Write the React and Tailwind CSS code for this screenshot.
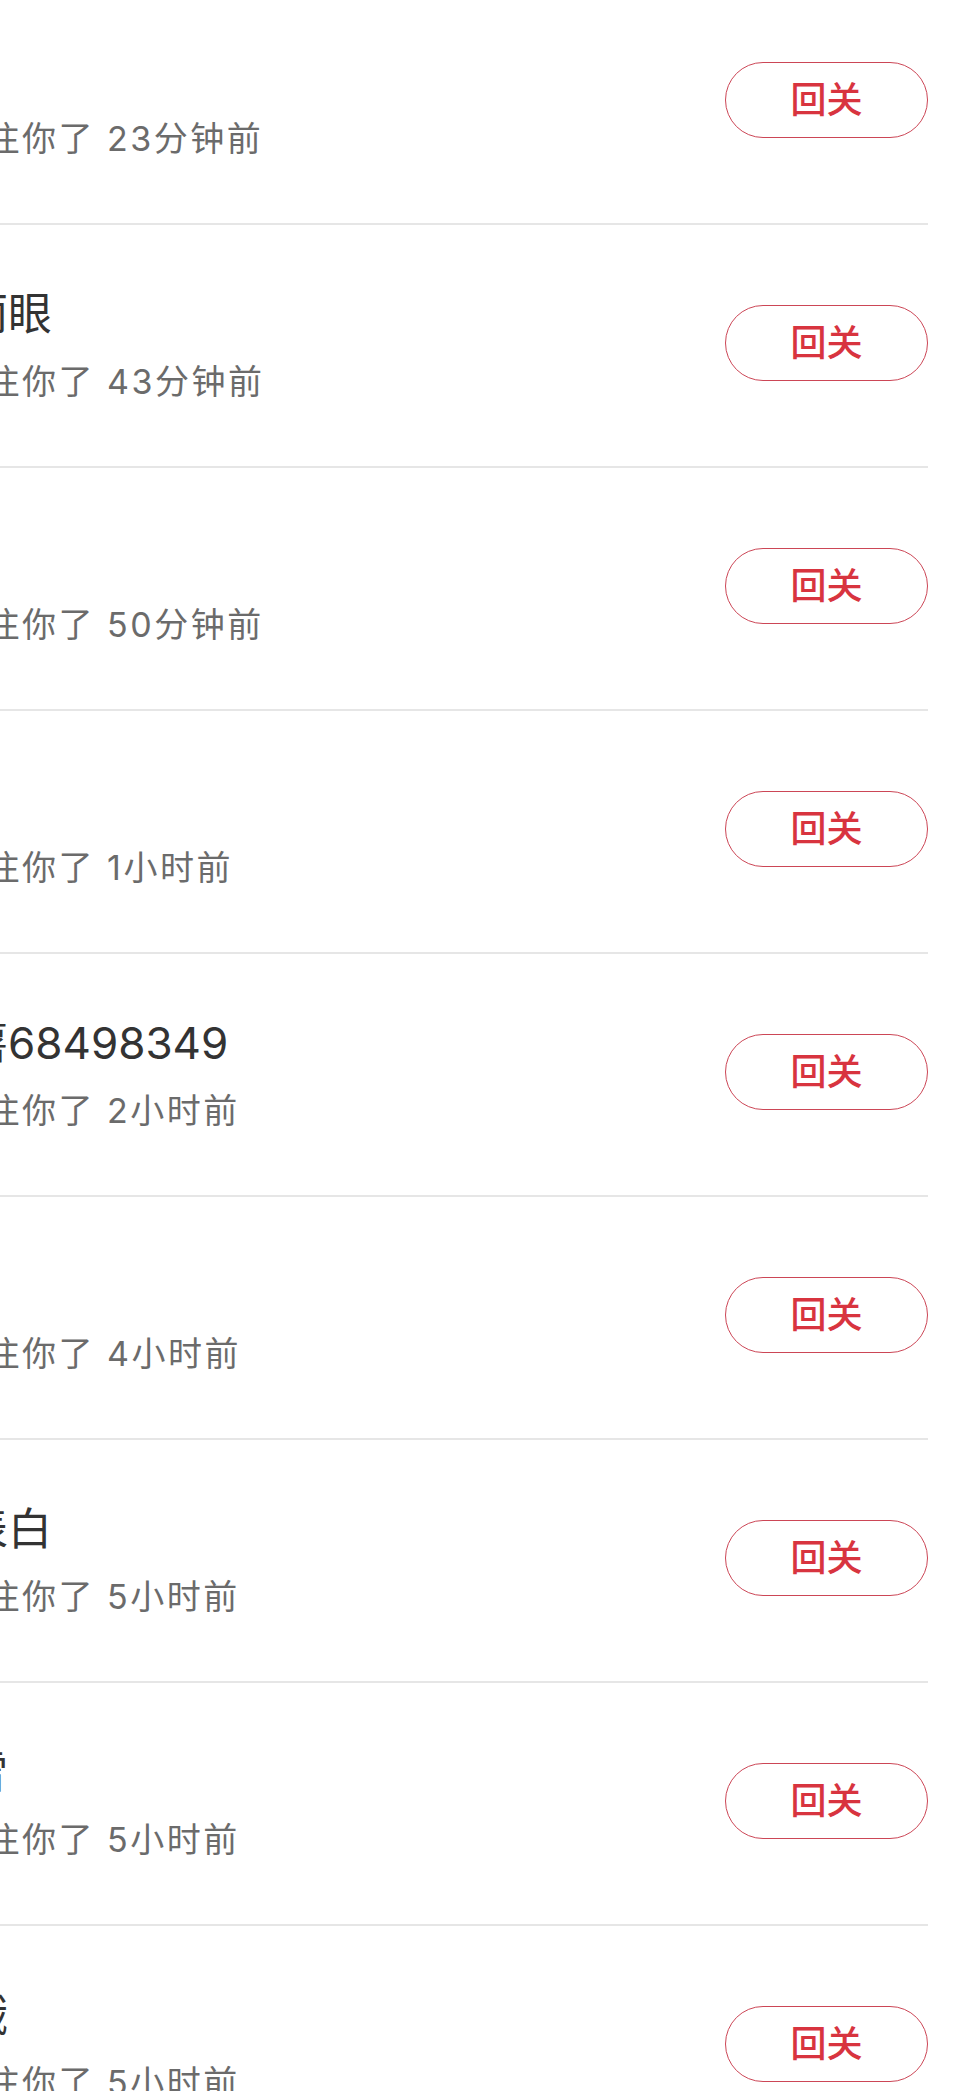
import React from "react";

const fans = [
  { name: "星河", time: "23分钟前" },
  { name: "一双丽眼", time: "43分钟前" },
  { name: "阿木", time: "50分钟前" },
  { name: "小鹿", time: "1小时前" },
  { name: "小红薯68498349", time: "2小时前" },
  { name: "晴川", time: "4小时前" },
  { name: "对你表白", time: "5小时前" },
  { name: "南山雪", time: "5小时前" },
  { name: "我好饿", time: "5小时前" },
];

const FanRow = ({ fan }) => {
  return (
    <div className="flex items-center h-[243px] mr-[38px] border-b-2 border-[#e6e6e6]">
      <div className="flex-1 min-w-0 -ml-[124px] flex flex-col whitespace-nowrap">
        <p className="text-[44px] leading-[52px] text-[#333333]">{fan.name}</p>
        <p className="mt-5 text-[34px] leading-[44px] tracking-[2.5px] text-[#6b6b6b]">
          开始关注你了 {fan.time}
        </p>
      </div>
      <button className="shrink-0 mb-[5px] w-[203px] h-[76px] rounded-full border-[1.5px] border-[#cc4656] bg-white text-[36px] leading-none font-medium text-[#d8343f]">
        回关
      </button>
    </div>
  );
};

const App = () => {
  return (
    <div className="w-full min-h-screen bg-white overflow-hidden font-[Inter,'Noto_Sans_CJK_SC',sans-serif]">
      <div className="-mt-[18px]">
        {fans.map((fan, i) => (
          <FanRow key={i} fan={fan} />
        ))}
      </div>
    </div>
  );
};

export default App;
